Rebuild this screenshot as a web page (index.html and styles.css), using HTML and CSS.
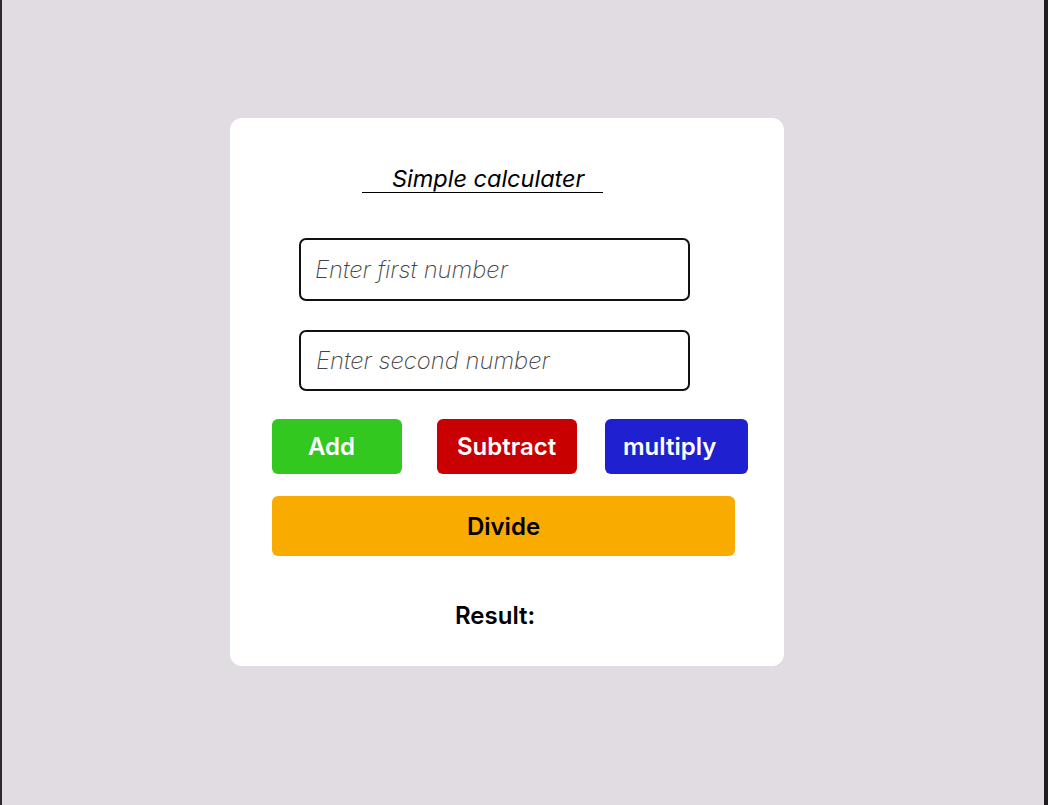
FILE: index.html
```html
<!DOCTYPE html>
<html>
<head>
<meta charset="utf-8">
<link rel="stylesheet" href="styles.css">
</head>
<body>
<div class="frame">
  <div class="card">
    <div class="title-row"><span class="title">Simple calculater</span></div>
    <input class="field field-1" type="text" placeholder="Enter first number">
    <input class="field field-2" type="text" placeholder="Enter second number">
    <div class="ops">
      <button class="btn btn-add">Add</button>
      <button class="btn btn-sub">Subtract</button>
      <button class="btn btn-mul">multiply</button>
    </div>
    <button class="btn btn-div">Divide</button>
    <div class="result">Result:</div>
  </div>
</div>
</body>
</html>
```
FILE: styles.css
```css
* { box-sizing: border-box; }
html, body { margin: 0; padding: 0; }
body { font-family: Inter, "Noto Sans", sans-serif; }
.frame {
  height: 805px;
  background: #e1dce2;
  border-left: 2px solid #2b2b2b;
  border-right: 4px solid #1e1e1e;
  padding-top: 118px;
  padding-left: 228px;
}
.card {
  width: 554px;
  height: 548px;
  background: #ffffff;
  border-radius: 12px;
  padding-top: 47px;
  display: flex;
  flex-direction: column;
  align-items: flex-start;
}
.title-row { padding-left: 132px; }
.title {
  display: inline-block;
  font-style: italic;
  font-weight: 400;
  font-size: 23.5px;
  line-height: 27px;
  padding: 0 19px 0 30px;
  border-bottom: 1.5px solid #000;
  color: #000;
}
.field {
  margin-left: 69px;
  width: 391px;
  border: 2px solid #111;
  border-radius: 7px;
  padding: 0 0 0 14px;
  font-family: Inter, sans-serif;
  font-size: 23.8px;
  font-style: italic;
  font-weight: 200;
  outline: none;
  background: #fff;
}
.field::placeholder { color: #444; }
.field-1 { margin-top: 45px; height: 63px; }
.field-2 { margin-top: 29px; height: 61px; padding-left: 15px; }
.ops {
  display: flex;
  margin-top: 28px;
  margin-left: 42px;
}
.btn {
  border: none;
  border-radius: 6px;
  font-family: Inter, sans-serif;
  font-size: 24px;
  font-weight: 600;
  color: #fff;
  text-align: left;
  padding: 0;
  height: 55px;
}
.btn-add { width: 130px; background: #33c820; padding-left: 36px; }
.btn-sub { width: 140px; background: #c80000; padding-left: 20px; margin-left: 35px; }
.btn-mul { width: 143px; background: #1f20d0; padding-left: 18px; margin-left: 28px; }
.btn-div {
  margin-top: 22px;
  margin-left: 42px;
  width: 463px;
  height: 60px;
  background: #faab00;
  color: #000;
  text-align: center;
}
.result {
  margin-top: 45px;
  margin-left: 225px;
  font-size: 24px;
  font-weight: 600;
  color: #000;
}
```
